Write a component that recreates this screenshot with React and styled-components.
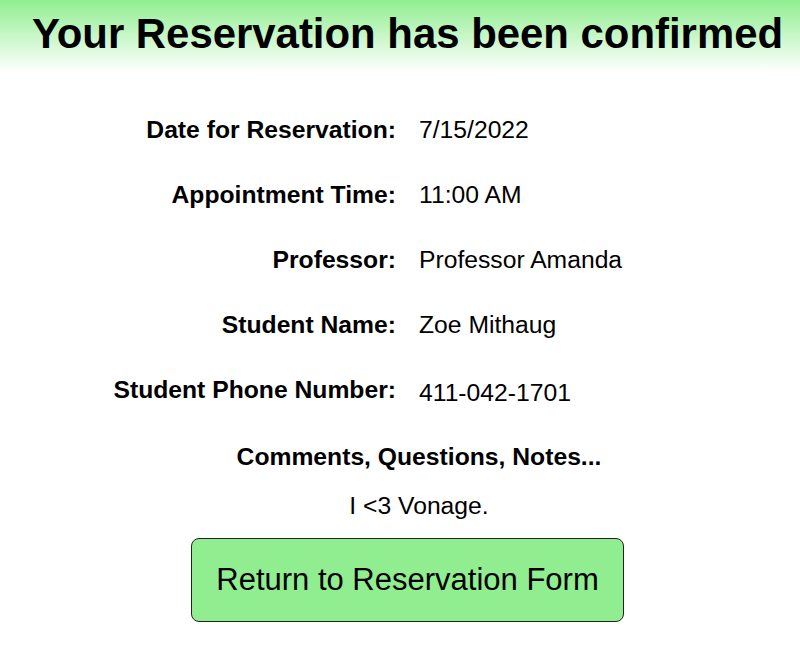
import React from "react"
import styled, { createGlobalStyle } from "styled-components"

const GlobalStyle = createGlobalStyle`
  body {
    margin: 0;
    background: #fff;
    font-family: "Liberation Sans", Arial, sans-serif;
    color: #000;
  }
`

const Header = styled.header`
  height: 72px;
  box-sizing: border-box;
  padding-top: 13px;
  padding-left: 15px;
  background: linear-gradient(to bottom, #90ee90, #fff);
`

const Title = styled.h1`
  margin: 0;
  font-size: 41.9px;
  line-height: 1;
  font-weight: 700;
  text-align: center;
  white-space: nowrap;
`

const Details = styled.dl`
  display: grid;
  grid-template-columns: 396px 1fr;
  column-gap: 23px;
  row-gap: 35px;
  margin: 43px 0 0;
  font-size: 24.7px;
  line-height: 30px;
`

const Label = styled.dt`
  text-align: right;
  font-weight: 700;
  white-space: nowrap;
`

const Value = styled.dd`
  margin: 0;
  padding-top: ${p => p.$drop || 0}px;
`

const Notes = styled.section`
  margin-top: 34px;
  padding-left: 38px;
  text-align: center;
  font-size: 24.7px;
  line-height: 30px;
`

const NotesTitle = styled.h2`
  margin: 0;
  font-size: inherit;
  font-weight: 700;
`

const NotesText = styled.p`
  margin: 19px 0 0;
`

const Actions = styled.div`
  display: flex;
  justify-content: center;
  padding-left: 15px;
  margin-top: 17px;
`

const ReturnBtn = styled.button`
  width: 433px;
  height: 84px;
  background: #90ee90;
  border: 1px solid #222;
  border-radius: 8px;
  font-family: inherit;
  font-size: 31px;
  color: #000;
  cursor: pointer;
`

const rows = [
  { label: "Date for Reservation:", value: "7/15/2022" },
  { label: "Appointment Time:", value: "11:00 AM" },
  { label: "Professor:", value: "Professor Amanda" },
  { label: "Student Name:", value: "Zoe Mithaug" },
  { label: "Student Phone Number:", value: "411-042-1701", drop: 3 },
]

const App = () => (
  <>
    <GlobalStyle />
    <Header>
      <Title>Your Reservation has been confirmed</Title>
    </Header>
    <Details>
      {rows.map(r => (
        <React.Fragment key={r.label}>
          <Label>{r.label}</Label>
          <Value $drop={r.drop}>{r.value}</Value>
        </React.Fragment>
      ))}
    </Details>
    <Notes>
      <NotesTitle>Comments, Questions, Notes...</NotesTitle>
      <NotesText>I &lt;3 Vonage.</NotesText>
    </Notes>
    <Actions>
      <ReturnBtn>Return to Reservation Form</ReturnBtn>
    </Actions>
  </>
)

export default App
